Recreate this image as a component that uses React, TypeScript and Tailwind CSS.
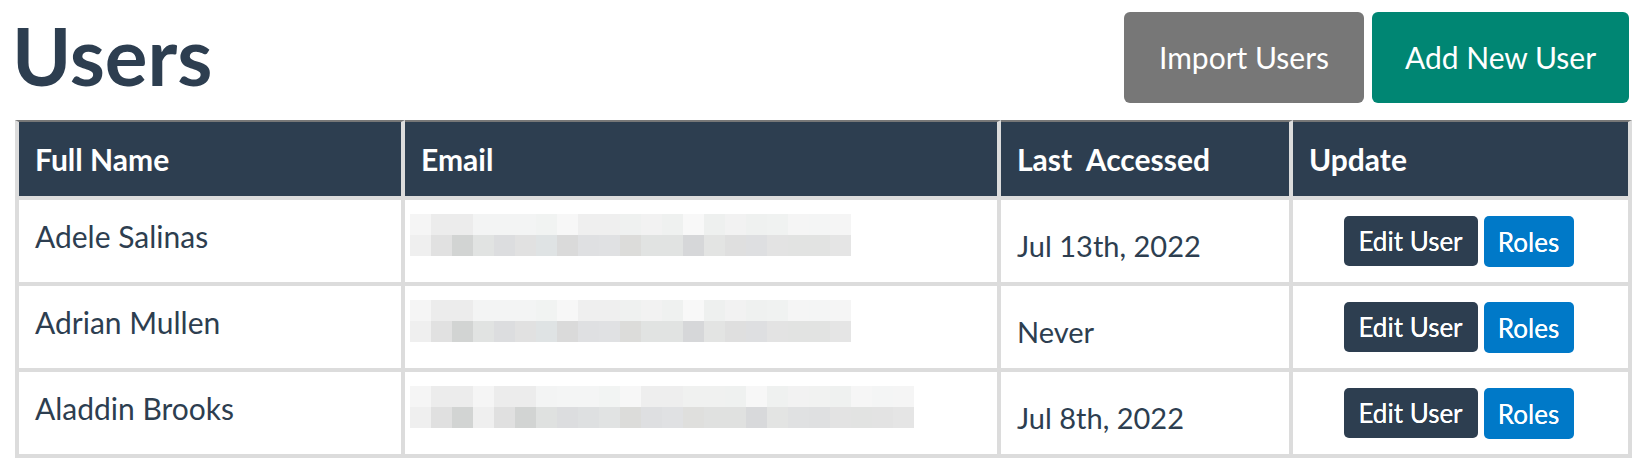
const font = { fontFamily: "Lato, 'Liberation Sans', sans-serif" };

const row1Top = ["#f5f5f5","#ececec","#ececec","#f3f4f4","#f3f4f4","#f3f4f4","#f1f3f2","#f7f7f7","#efefef","#efefef","#eff1f0","#f2f2f2","#eff1f0","#f8f8f8","#eef0ef","#f2f2f2","#eff1f0","#f0f2f1","#f5f5f5","#f4f5f5","#f5f5f5"];
const row1Bot = ["#efefef","#e1e1e1","#d2d4d3","#e1e3e2","#dcdddf","#e1e1e1","#dfe3e4","#dadada","#dfe0e2","#e0e1e3","#dcdcda","#e1e3e2","#e1e3e2","#d6d7d9","#e3e4e3","#dfdfdf","#dedfe1","#e3e3e3","#e2e3e2","#e2e3e2","#e5e5e5"];
const row3Top = ["#f5f5f5","#ececec","#ececec","#f5f5f5","#ececec","#ececec","#f3f4f4","#f4f5f5","#f4f5f5","#f2f4f3","#f7f7f7","#eeeeee","#eeeeee","#f0f1f0","#f0f1f0","#eff1f0","#f7f7f7","#eff1f0","#f2f2f2","#f1f2f1","#eff1f0","#f6f6f6","#f4f5f5","#f5f5f5"];
const row3Bot = ["#efefef","#e0e0e0","#d2d4d3","#efefef","#e0e0e0","#d2d4d3","#dfe1e0","#dcdddf","#dee0e1","#e1e3e3","#dcdcda","#dedfe1","#e0e1e3","#dfdfdd","#e0e1e0","#e0e1e0","#d8d9db","#e3e4e3","#e0e1e2","#dfe0e1","#e3e3e3","#e2e3e2","#e3e3e3","#e5e5e5"];

// pixelated (redacted) email address
function Redacted({ top, bottom }: { top: string[]; bottom: string[] }) {
  const w = 21;
  return (
    <svg width={top.length * w} height={42} className="block">
      {top.map((c, i) => (
        <rect key={"t" + i} x={i * w} y={0} width={w} height={21} fill={c} />
      ))}
      {bottom.map((c, i) => (
        <rect key={"b" + i} x={i * w} y={21} width={w} height={21} fill={c} />
      ))}
    </svg>
  );
}

const users = [
  { name: "Adele Salinas", top: row1Top, bottom: row1Bot, last: "Jul 13th, 2022" },
  { name: "Adrian Mullen", top: row1Top, bottom: row1Bot, last: "Never" },
  { name: "Aladdin Brooks", top: row3Top, bottom: row3Bot, last: "Jul 8th, 2022" },
];

export default function App() {
  return (
    <div className="bg-white min-h-[470px] text-[#2d3e50]" style={font}>
      <div className="flex items-start justify-between pt-3 pl-[12px] pr-[21px]">
        <h1 className="mt-[3px] text-[80px] leading-none font-bold text-[#2d3e50]">Users</h1>
        <div className="flex gap-2">
          <button className="h-[91px] w-[240px] rounded-md bg-[#777777] text-[30px] text-white">
            Import Users
          </button>
          <button className="h-[91px] w-[257px] rounded-md bg-[#008673] text-[30px] text-white">
            Add New User
          </button>
        </div>
      </div>

      <table className="ml-[15px] mt-[17px] w-[1617px] table-fixed border-separate border-spacing-0">
        <thead>
          <tr className="bg-[#2d3e50] text-white text-[30px] font-bold text-left">
            <th className="w-[390px] h-[80px] border-t-2 border-t-[#777777] border-l-4 border-l-[#dcdcdc] border-r-4 border-r-[#dcdcdc] border-b-4 border-b-[#dcdcdc] px-4 align-middle">
              Full Name
            </th>
            <th className="w-[596px] border-t-2 border-t-[#777777] border-r-4 border-r-[#dcdcdc] border-b-4 border-b-[#dcdcdc] px-4 align-middle">
              Email
            </th>
            <th className="w-[292px] border-t-2 border-t-[#777777] border-r-4 border-r-[#dcdcdc] border-b-4 border-b-[#dcdcdc] px-4 align-middle">
              Last&nbsp; Accessed
            </th>
            <th className="w-[339px] border-t-2 border-t-[#777777] border-r-4 border-r-[#dcdcdc] border-b-4 border-b-[#dcdcdc] px-4 align-middle">
              Update
            </th>
          </tr>
        </thead>
        <tbody>
          {users.map((u) => (
            <tr key={u.name} className="text-[30px] leading-[36px]">
              <td className="h-[86px] border-l-4 border-r-4 border-b-4 border-[#dcdcdc] px-4 pt-[18px] align-top">
                {u.name}
              </td>
              <td className="border-r-4 border-b-4 border-[#dcdcdc] pl-[5px] pt-[14px] align-top">
                <Redacted top={u.top} bottom={u.bottom} />
              </td>
              <td className="border-r-4 border-b-4 border-[#dcdcdc] px-4 pt-[28px] align-top text-[29px]">
                {u.last}
              </td>
              <td className="border-r-4 border-b-4 border-[#dcdcdc] pt-[16px] pr-[4px] align-top">
                <div className="flex justify-center gap-[6px] text-[26px] leading-none text-white">
                  <button className="h-[50px] w-[134px] rounded-[5px] bg-[#2d3e50] [text-shadow:0_0_0.4px_#fff]">Edit User</button>
                  <button className="h-[51px] w-[90px] rounded-[5px] bg-[#0079c8] [text-shadow:0_0_0.4px_#fff]">Roles</button>
                </div>
              </td>
            </tr>
          ))}
        </tbody>
      </table>
    </div>
  );
}
